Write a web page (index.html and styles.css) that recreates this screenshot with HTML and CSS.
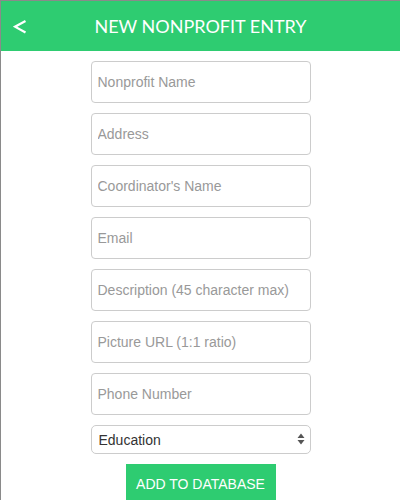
FILE: index.html
```html
<!DOCTYPE html>
<html>
<head>
<meta charset="utf-8">
<link rel="stylesheet" href="styles.css">
</head>
<body>
<div class="frame">
  <header class="topbar">
    <svg class="back" width="16" height="16" viewBox="0 0 16 16"><polyline points="12.5,2 2,7.7 12.5,13.5" fill="none" stroke="#fff" stroke-width="2.2" stroke-linejoin="miter"/></svg>
    <h1 class="title">NEW NONPROFIT ENTRY</h1>
  </header>
  <form class="form">
    <input class="field" type="text" placeholder="Nonprofit Name">
    <input class="field" type="text" placeholder="Address">
    <input class="field" type="text" placeholder="Coordinator's Name">
    <input class="field" type="text" placeholder="Email">
    <input class="field" type="text" placeholder="Description (45 character max)">
    <input class="field" type="text" placeholder="Picture URL (1:1 ratio)">
    <input class="field" type="text" placeholder="Phone Number">
    <div class="select-wrap">
      <select class="select">
        <option>Education</option>
      </select>
      <svg class="arrows" width="8" height="12" viewBox="0 0 8 12"><path d="M4 0.5 L7.5 5 H0.5 Z M4 11.5 L7.5 7 H0.5 Z" fill="#555"/></svg>
    </div>
    <button class="submit" type="button">ADD TO DATABASE</button>
  </form>
</div>
</body>
</html>
```
FILE: styles.css
```css
html, body {
  margin: 0;
  padding: 0;
  background: #fff;
}
.frame {
  width: 400px;
  height: 500px;
  box-sizing: border-box;
  border-top: 1px solid #8a8a8a;
  border-left: 1px solid #8a8a8a;
  overflow: hidden;
}
.topbar {
  height: 50px;
  background: #2ecc71;
  display: flex;
  align-items: center;
  justify-content: center;
  position: relative;
}
.back {
  position: absolute;
  left: 12px;
  top: 18px;
}
.title {
  margin: 0;
  color: #fff;
  font-family: Lato, "Liberation Sans", sans-serif;
  font-weight: 400;
  font-size: 18px;
  letter-spacing: 0;
}
.form {
  display: flex;
  flex-direction: column;
  align-items: center;
  gap: 10px;
  padding-top: 10px;
}
.field {
  width: 220px;
  height: 42px;
  box-sizing: border-box;
  border: 1px solid #cccccc;
  border-radius: 4px;
  padding: 0 6px;
  font-family: "Liberation Sans", Arial, sans-serif;
  font-size: 14px;
  color: #333;
  outline: none;
}
.field::placeholder {
  color: #999;
  font-family: "Liberation Sans", Arial, sans-serif;
}
.select-wrap {
  position: relative;
  width: 220px;
  height: 29px;
}
.select {
  appearance: none;
  -webkit-appearance: none;
  width: 100%;
  height: 29px;
  box-sizing: border-box;
  border: 1px solid #cccccc;
  border-radius: 5px;
  background: #fff;
  padding: 0 7px;
  font-family: "Liberation Sans", Arial, sans-serif;
  font-size: 14px;
  color: #333;
  outline: none;
}
.arrows {
  position: absolute;
  right: 6px;
  top: 8px;
  pointer-events: none;
}
.submit {
  width: 150px;
  height: 40px;
  border: none;
  background: #2ecc71;
  color: #fff;
  font-family: "Liberation Sans", Arial, sans-serif;
  font-size: 14px;
  padding: 0;
}
```
